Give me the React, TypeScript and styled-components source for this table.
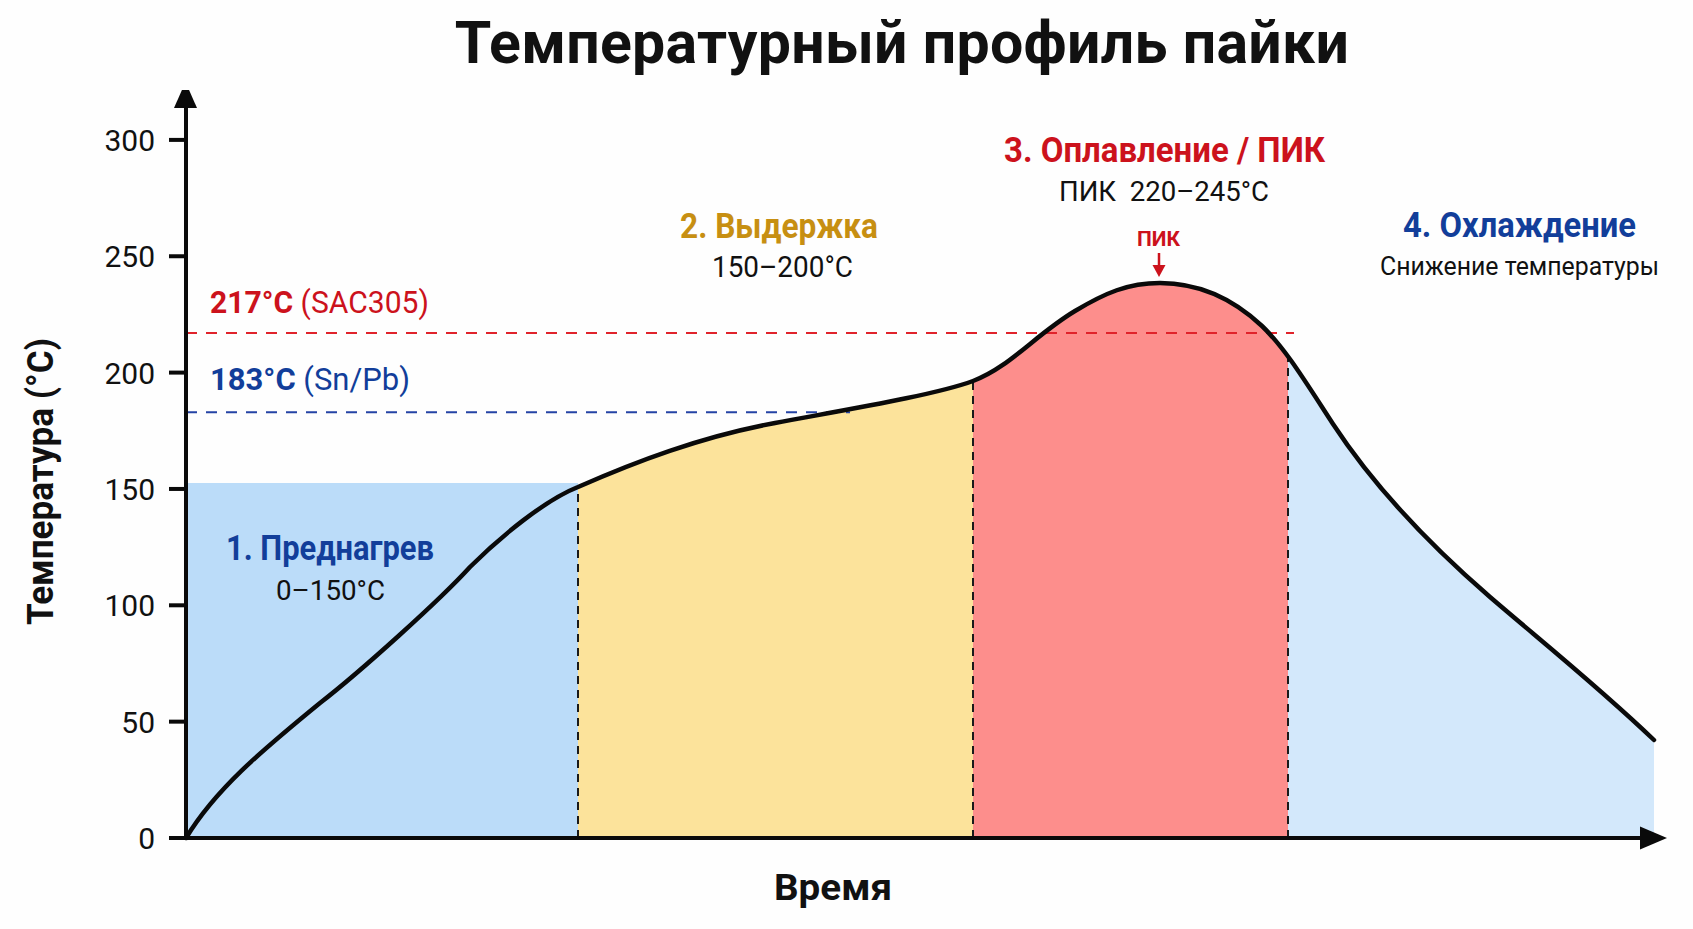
import React from 'react'
import styled, { createGlobalStyle } from 'styled-components'

const GlobalStyle = createGlobalStyle`
  html, body {
    margin: 0;
    padding: 0;
    background: #fefefe;
  }
  body {
    font-family: Roboto, 'Liberation Sans', Arial, sans-serif;
  }
`

// chart geometry, in page pixels
const X0 = 186
const Y0 = 838
const PX_PER_DEG = 2.327
const yOf = (t: number) => Y0 - t * PX_PER_DEG

// temperature profile as a chain of cubic segments
const curveD = [
  'M186,838',
  'C215,790 260,752 320,703', // preheat
  'C360,672 440,600 470,567',
  'C500,537 545,500 578,487',
  'C635,462 700,437 775,423', // soak
  'C850,409 935,395 973,381',
  'C1010,367 1035,335 1075,311', // reflow
  'C1105,293 1128,283 1160,283',
  'C1195,283 1230,296 1262,326',
  'C1285,348 1305,381 1333,424', // cooling
  'C1375,488 1430,545 1490,597',
  'C1540,640 1600,688 1654,740',
].join(' ')
const areaD = `${curveD} L1654,${Y0} L${X0},${Y0} Z`

const TICKS = [0, 50, 100, 150, 200, 250, 300]

const ZONES = [
  { from: 578, to: 973, color: '#fce39b' },
  { from: 973, to: 1288, color: '#fd8e8c' },
  { from: 1288, to: 1656, color: '#d3e8fb' },
]

const BOUNDARIES = [578, 973, 1288]

const App = () => {
  return (
    <>
      <GlobalStyle />
      <Page>
        <Header>
          <Title>Температурный профиль пайки</Title>
        </Header>
        <Chart width={1693} height={839} viewBox='0 90 1693 839'>
          <defs>
            <clipPath id='under-curve'>
              <path d={areaD} />
            </clipPath>
          </defs>

          <rect x={X0} y={483} width={578 - X0} height={Y0 - 483} fill='#bbdcf9' />
          <g clipPath='url(#under-curve)'>
            {ZONES.map(z => (
              <rect key={z.from} x={z.from} y={250} width={z.to - z.from} height={Y0 - 250} fill={z.color} />
            ))}
            {BOUNDARIES.map(x => (
              <Boundary key={x} x1={x} x2={x} y1={Y0} y2={250} />
            ))}
          </g>

          <Guide color='#e0232b' x1={X0} x2={1294} y1={yOf(217)} y2={yOf(217)} />
          <Guide color='#2443a5' x1={X0} x2={850} y1={yOf(183)} y2={yOf(183)} />

          <Curve d={curveD} />

          {/* axes */}
          <Axis x1={X0} y1={Y0 + 2} x2={X0} y2={104} />
          <polygon points='185.5,82 174,108 197,108' fill='#0a0a0a' />
          <Axis x1={X0 - 2} y1={Y0} x2={1645} y2={Y0} />
          <polygon points='1667,838 1640,826.5 1640,849.5' fill='#0a0a0a' />

          {TICKS.map(t => (
            <g key={t}>
              <Axis x1={169} x2={X0} y1={yOf(t)} y2={yOf(t)} />
              <TickLabel x={155} y={yOf(t) + 11}>{t}</TickLabel>
            </g>
          ))}

          <AxisTitle transform='translate(53,481.5) rotate(-90)' textLength={287} lengthAdjust='spacingAndGlyphs'>
            Температура (°C)
          </AxisTitle>
          <AxisTitle x={833} y={900} textLength={118} lengthAdjust='spacingAndGlyphs'>
            Время
          </AxisTitle>

          {/* melting points */}
          <Note color='#cc121c' size={32} x={210} y={313} textLength={219} lengthAdjust='spacingAndGlyphs' anchor='start'>
            <tspan fontWeight={700}>217°C</tspan> (SAC305)
          </Note>
          <Note color='#123e9a' size={32} x={210} y={390} textLength={200} lengthAdjust='spacingAndGlyphs' anchor='start'>
            <tspan fontWeight={700}>183°C</tspan> (Sn/Pb)
          </Note>

          {/* zone captions */}
          <ZoneTitle color='#123e9a' x={226} y={560} textLength={208} lengthAdjust='spacingAndGlyphs'>
            1. Преднагрев
          </ZoneTitle>
          <Note color='#111' size={28} x={276} y={600} textLength={109} lengthAdjust='spacingAndGlyphs' anchor='start'>
            0–150°C
          </Note>

          <ZoneTitle color='#c78f12' x={680} y={238} textLength={198} lengthAdjust='spacingAndGlyphs'>
            2. Выдержка
          </ZoneTitle>
          <Note color='#111' size={29} x={712} y={277} textLength={141} lengthAdjust='spacingAndGlyphs' anchor='start'>
            150–200°C
          </Note>

          <ZoneTitle color='#cc121c' x={1004} y={162} textLength={321} lengthAdjust='spacingAndGlyphs'>
            3. Оплавление / ПИК
          </ZoneTitle>
          <Note color='#111' size={28} x={1059} y={201} textLength={210} lengthAdjust='spacingAndGlyphs' anchor='start'>
            ПИК{'\u00a0\u00a0'}220–245°C
          </Note>

          <PeakTag x={1137} y={246} textLength={43} lengthAdjust='spacingAndGlyphs'>ПИК</PeakTag>
          <line x1={1159} x2={1159} y1={253} y2={267} stroke='#cc121c' strokeWidth={2.5} />
          <polygon points='1152.5,265 1165.5,265 1159,277' fill='#cc121c' />

          <ZoneTitle color='#123e9a' x={1403} y={237} textLength={233} lengthAdjust='spacingAndGlyphs'>
            4. Охлаждение
          </ZoneTitle>
          <Note color='#111' size={25} x={1380} y={275} textLength={279} lengthAdjust='spacingAndGlyphs' anchor='start'>
            Снижение температуры
          </Note>
        </Chart>
      </Page>
    </>
  )
}

export default App

const Page = styled.div`
  width: 1693px;
  height: 929px;
  display: grid;
  grid-template-rows: 90px 839px;
  background: #fefefe;
  overflow: hidden;
`

const Header = styled.header`
  display: flex;
  justify-content: center;
  align-items: flex-start;
  padding: 13px 0 0 111px;
  box-sizing: border-box;
`

const Title = styled.h1`
  margin: 0;
  font-family: Roboto, 'Liberation Sans', Arial, sans-serif;
  font-size: 59px;
  line-height: 59px;
  font-weight: 700;
  color: #111;
  letter-spacing: 0.3px;
  white-space: nowrap;
`

const Chart = styled.svg`
  display: block;
  font-family: Roboto, 'Liberation Sans', Arial, sans-serif;
`

const Curve = styled.path`
  fill: none;
  stroke: #0a0a0a;
  stroke-width: 4.5;
  stroke-linejoin: round;
  stroke-linecap: round;
`

const Axis = styled.line`
  stroke: #0a0a0a;
  stroke-width: 4;
`

const Boundary = styled.line`
  stroke: #1a1a1a;
  stroke-width: 2;
  stroke-dasharray: 8 6;
`

const Guide = styled.line<{ color: string }>`
  stroke: ${({ color }) => color};
  stroke-width: 2;
  stroke-dasharray: 11 9;
`

const TickLabel = styled.text`
  font-size: 30px;
  font-weight: 400;
  fill: #111;
  text-anchor: end;
`

const AxisTitle = styled.text`
  font-size: 36px;
  font-weight: 700;
  fill: #111;
  text-anchor: middle;
`

const ZoneTitle = styled.text<{ color: string }>`
  font-size: 35px;
  font-weight: 700;
  fill: ${({ color }) => color};
`

const Note = styled.text<{ color: string; size: number; anchor: string }>`
  font-size: ${({ size }) => size}px;
  font-weight: 400;
  fill: ${({ color }) => color};
  text-anchor: ${({ anchor }) => anchor};
`

const PeakTag = styled.text`
  font-size: 21px;
  font-weight: 700;
  fill: #cc121c;
`
